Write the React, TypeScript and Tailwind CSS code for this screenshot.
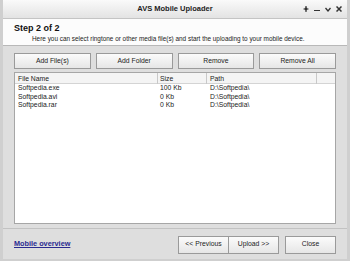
import { useState } from "react";

const files = [
  { name: "Softpedia.exe", size: "100 Kb", path: "D:\\Softpedia\\" },
  { name: "Softpedia.avi", size: "0 Kb", path: "D:\\Softpedia\\" },
  { name: "Softpedia.rar", size: "0 Kb", path: "D:\\Softpedia\\" },
];

const topButtons = ["Add File(s)", "Add Folder", "Remove", "Remove All"];

function Btn({ label, className = "" }: { label: string; className?: string }) {
  return (
    <button
      className={
        "flex h-[16px] items-center justify-center border border-[#9a9a9a] bg-gradient-to-b from-[#fbfbfb] to-[#e6e6e6] text-[6.8px] text-[#222] " +
        className
      }
    >
      {label}
    </button>
  );
}

export default function App() {
  const [selected, setSelected] = useState<number | null>(null);

  return (
    <div
      className="flex h-[261px] w-[350px] flex-col overflow-hidden border-x-[3px] border-[#cfcfcf] bg-[#dedede] text-[#1a1a1a]"
      style={{ fontFamily: "Tahoma, 'Liberation Sans', Arial, sans-serif" }}
    >
      {/* Title bar */}
      <div className="grid h-[19px] shrink-0 grid-cols-[1fr_auto_1fr] items-center border-b border-[#c4c4c4] bg-gradient-to-b from-[#fafafa] to-[#e3e3e3]">
        <div />
        <div className="text-[7.5px] font-bold text-[#222]">AVS Mobile Uploader</div>
        <div className="flex items-center justify-end gap-[5px] pr-[5px] text-[#333]">
          <svg width="6" height="6" viewBox="0 0 6 6">
            <path d="M3 0 V6 M0.5 3 H5.5" stroke="#333" strokeWidth="1.2" />
            <circle cx="3" cy="3" r="1.4" fill="#333" />
          </svg>
          <span className="mt-[3px] h-[1.5px] w-[6px] bg-[#333]" />
          <svg width="6" height="5" viewBox="0 0 6 5">
            <path d="M0.5 1 L3 4 L5.5 1" fill="none" stroke="#333" strokeWidth="1.3" />
          </svg>
          <svg width="6" height="6" viewBox="0 0 6 6">
            <path d="M0.5 0.5 L5.5 5.5 M5.5 0.5 L0.5 5.5" stroke="#333" strokeWidth="1.5" />
          </svg>
        </div>
      </div>

      {/* Step header */}
      <div className="h-[27px] shrink-0 border-b border-[#b8b8b8] bg-[#fcfcfc] pl-[11px] pt-[4px]">
        <div className="text-[9px] font-bold leading-[11px] text-[#111]">Step 2 of 2</div>
        <div className="pl-[18px] text-[6.4px] leading-[9px] text-[#222]">
          Here you can select ringtone or other media file(s) and start the uploading to your mobile device.
        </div>
      </div>

      {/* Body */}
      <div className="flex flex-1 flex-col px-[11px] pt-[7px]">
        <div className="grid grid-cols-4 gap-[5px]">
          {topButtons.map((b) => (
            <Btn key={b} label={b} />
          ))}
        </div>

        <div className="mt-[3px] h-[152px] border border-[#a6a6a6] bg-white">
          <div className="grid h-[11px] grid-cols-[143px_49px_110px_1fr] border-b border-[#d4d4d4] bg-[#f4f4f4] text-[6.8px] leading-[11px] text-[#222]">
            <div className="border-r border-[#c8c8c8] pl-[3px]">File Name</div>
            <div className="border-r border-[#c8c8c8] pl-[2px]">Size</div>
            <div className="border-r border-[#c8c8c8] pl-[3px]">Path</div>
            <div />
          </div>
          {files.map((f, i) => (
            <div
              key={f.name}
              onClick={() => setSelected(i)}
              className={
                "grid h-[8.5px] grid-cols-[143px_49px_110px_1fr] text-[6.8px] leading-[8.5px] " +
                (selected === i ? "bg-[#3399ff] text-white" : "text-[#222]")
              }
            >
              <div className="pl-[3px]">{f.name}</div>
              <div className="pl-[2px]">{f.size}</div>
              <div className="pl-[3px]">{f.path}</div>
              <div />
            </div>
          ))}
        </div>
      </div>

      {/* Footer */}
      <div className="flex h-[31px] shrink-0 items-center border-t border-[#c2c2c2] px-[11px] pt-[1px]">
        <a className="text-[7.3px] font-bold text-[#2a2a90] underline">Mobile overview</a>
        <div className="flex-1" />
        <Btn label="<< Previous" className="h-[18px] w-[51px]" />
        <Btn label="Upload >>" className="-ml-px h-[18px] w-[51px]" />
        <Btn label="Close" className="ml-[6px] h-[18px] w-[51px]" />
      </div>
      <div className="h-[2px] shrink-0 bg-[#cfcfcf]" />
    </div>
  );
}
